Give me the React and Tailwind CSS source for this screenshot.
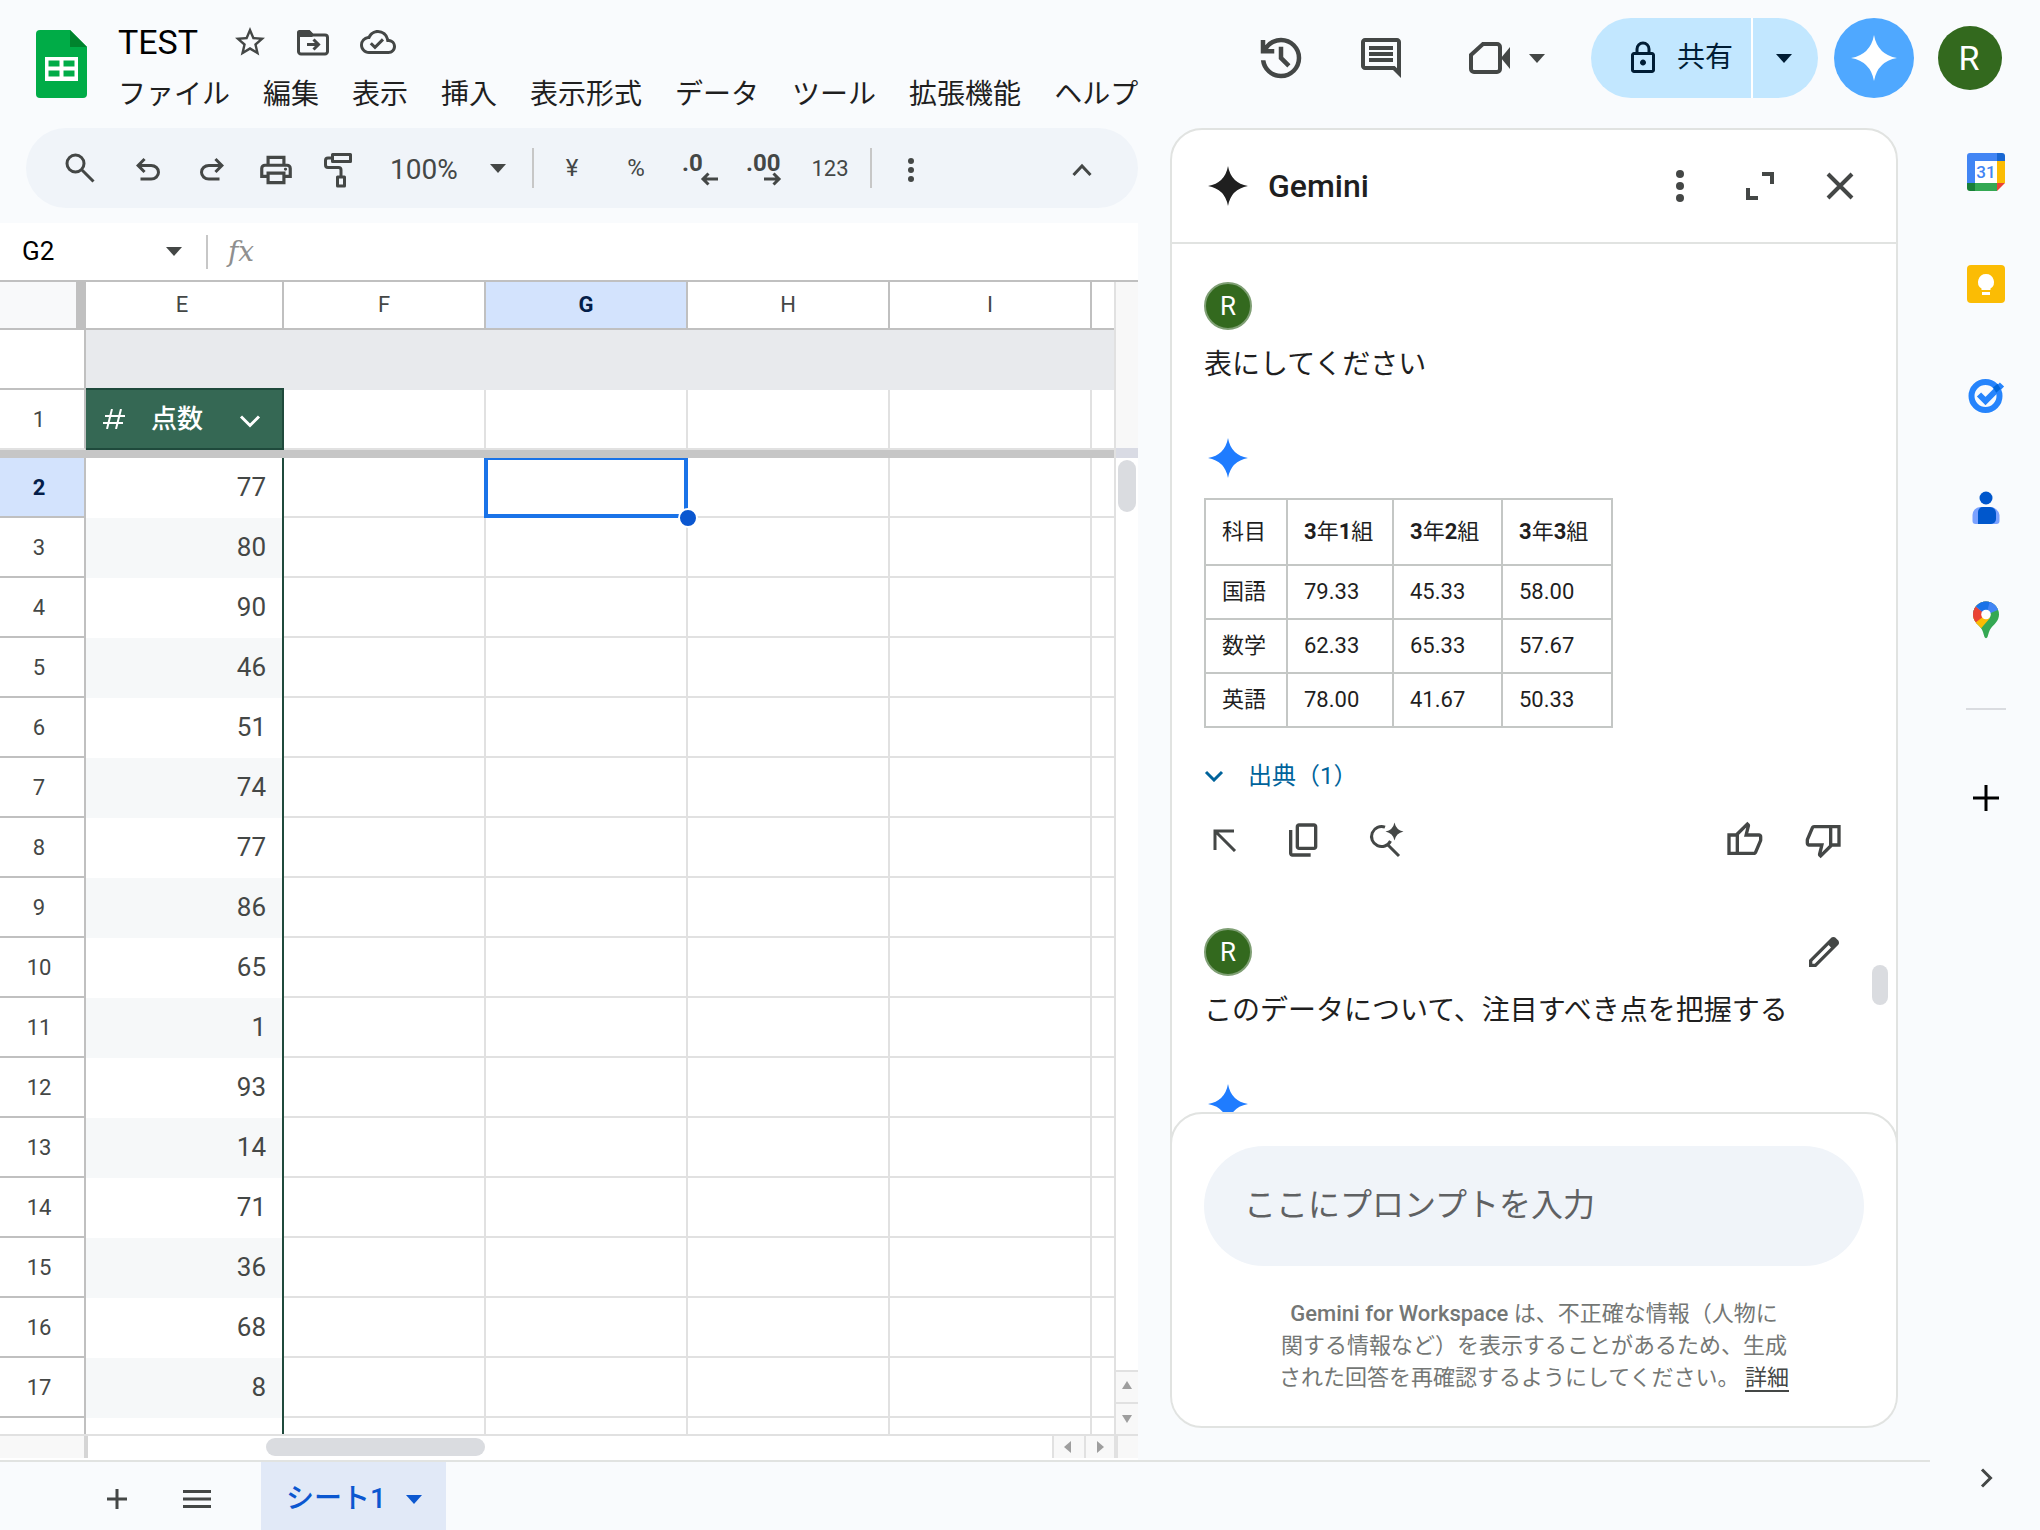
import React from "react";
import { MdStarBorder, MdOutlineCloudDone } from "react-icons/md";

const SYMBOLS = {
  undo: "M280-200v-80h284q63 0 109.5-40T720-420q0-60-46.5-100T564-560H312l104 104-56 56-200-200 200-200 56 56-104 104h252q97 0 166.5 63T800-420q0 94-69.5 157T564-200H280Z",
  redo: "M396-200q-97 0-166.5-63T160-420q0-94 69.5-157T396-640h252L544-744l56-56 200 200-200 200-56-56 104-104H396q-63 0-109.5 40T240-420q0 60 46.5 100T396-280h284v80H396Z",
  print:
    "M640-640v-120H320v120h-80v-200h480v200h-80Zm-480 80h640-640Zm560 100q17 0 28.5-11.5T760-500q0-17-11.5-28.5T720-540q-17 0-28.5 11.5T680-500q0 17 11.5 28.5T720-460Zm-80 260v-160H320v160h320Zm80 80H240v-160H80v-240q0-51 35-85.5t85-34.5h560q51 0 85.5 34.5T880-520v240H720v160Zm80-240v-160q0-17-11.5-28.5T760-560H200q-17 0-28.5 11.5T160-520v160h80v-80h480v80h80Z",
  history:
    "M480-120q-138 0-240.5-91.5T122-440h82q14 104 92.5 172T480-200q117 0 198.5-81.5T760-480q0-117-81.5-198.5T480-760q-69 0-129 32t-101 88h110v80H120v-240h80v94q51-64 124.5-99T480-840q75 0 140.5 28.5t114 77q48.5 48.5 77 114T840-480q0 75-28.5 140.5t-77 114q-48.5 48.5-114 77T480-120Zm112-192L440-464v-216h80v184l128 128-56 56Z",
  comment:
    "M880-80 720-240H160q-33 0-56.5-23.5T80-320v-480q0-33 23.5-56.5T160-880h640q33 0 56.5 23.5T880-800v720ZM160-320h594l46 45v-525H160v480Zm80-80h480v-80H240v80Zm0-120h480v-80H240v80Zm0-120h480v-80H240v80Z",
  lock: "M240-80q-33 0-56.5-23.5T160-160v-400q0-33 23.5-56.5T240-640h40v-80q0-83 58.5-141.5T480-920q83 0 141.5 58.5T680-720v80h40q33 0 56.5 23.5T800-560v400q0 33-23.5 56.5T720-80H240Zm0-80h480v-400H240v400Zm240-120q33 0 56.5-23.5T560-360q0-33-23.5-56.5T480-440q-33 0-56.5 23.5T400-360q0 33 23.5 56.5T480-280ZM360-640h240v-80q0-50-35-85t-85-35q-50 0-85 35t-35 85v80Z",
  copy: "M360-240q-33 0-56.5-23.5T280-320v-480q0-33 23.5-56.5T360-880h360q33 0 56.5 23.5T800-800v480q0 33-23.5 56.5T720-240H360Zm0-80h360v-480H360v480ZM200-80q-33 0-56.5-23.5T120-160v-560h80v560h440v80H200Z",
  thumbUp:
    "M720-120H280v-520l280-280 50 50q7 7 11.5 19t4.5 23v14l-44 174h258q32 0 56 24t24 56v80q0 7-2 15t-4 15L794-168q-9 20-30 34t-44 14Zm-360-80h360l120-280v-80H480l54-220-174 174v406Zm-80-440v80H160v360h120v80H80v-520h200Z",
  thumbDown:
    "M240-840h440v520L400-40l-50-50q-7-7-11.5-19t-4.5-23v-14l44-174H120q-32 0-56-24t-24-56v-80q0-7 2-15t4-15l120-282q9-20 30-34t44-14Zm360 80H240L120-480v80h360l-54 220 174-174v-406Zm80 440v-80h120v-360H680v-80h200v520H680Z",
  edit: "M200-200h57l391-391-57-57-391 391v57Zm-80 80v-170l528-527q12-11 26.5-17t30.5-6q16 0 31 6t26 18l55 56q12 11 17.5 26t5.5 30q0 16-5.5 30.5T817-647L290-120H120Z",
};

function Symbol({ name, size }) {
  return (
    <svg width={size} height={size} viewBox="0 -960 960 960" fill="currentColor" aria-hidden="true">
      <path d={SYMBOLS[name]} />
    </svg>
  );
}

function Line({ w, h, d, sw = 4, cap = "butt", join = "miter" }) {
  return (
    <svg width={w} height={h} viewBox={`0 0 ${w} ${h}`} fill="none" stroke="currentColor" strokeWidth={sw} strokeLinecap={cap} strokeLinejoin={join} aria-hidden="true">
      <path d={d} />
    </svg>
  );
}

function Caret({ w = 16, h = 9 }) {
  return (
    <svg width={w} height={h} viewBox="0 0 16 9" fill="currentColor" aria-hidden="true">
      <path d="M0 0h16l-8 9z" />
    </svg>
  );
}

function Spark({ size = 40 }) {
  return (
    <svg width={size} height={size} viewBox="0 0 40 40" fill="currentColor" aria-hidden="true">
      <path d="M20 0Q23 17 40 20Q23 23 20 40Q17 23 0 20Q17 17 20 0Z" />
    </svg>
  );
}

function Dots({ h = 32, r = 4 }) {
  return (
    <svg width="10" height={h} viewBox={`0 0 10 ${h}`} fill="currentColor" aria-hidden="true">
      <circle cx="5" cy={r} r={r} />
      <circle cx="5" cy={h / 2} r={r} />
      <circle cx="5" cy={h - r} r={r} />
    </svg>
  );
}

function Tool({ label, className = "w-16", children }) {
  return (
    <button type="button" aria-label={label} className={`flex h-full shrink-0 items-center justify-center ${className}`}>
      {children}
    </button>
  );
}

const MENUS = ["ファイル", "編集", "表示", "挿入", "表示形式", "データ", "ツール", "拡張機能", "ヘルプ"];

function Header() {
  return (
    <header className="flex h-32 shrink-0 items-start justify-between pr-[38px] pl-9 text-[#444746]">
      <div className="flex">
        <svg className="mt-[30px]" width="52" height="68" viewBox="0 0 52 68" aria-hidden="true">
          <path d="M4 0h30l17 17v47a4 4 0 0 1-4 4H4a4 4 0 0 1-4-4V4a4 4 0 0 1 4-4z" fill="#00ac47" />
          <path d="M34 0l17 17H34z" fill="#00832d" />
          <path d="M9 27h33v24H9zM12.500 30.500v6h11v-6zM27.500 30.500v6h11v-6zM12.500 40.500v6h11v-6zM27.500 40.500v6h11v-6z" fill="#fff" fillRule="evenodd" />
        </svg>
        <div className="flex flex-col pt-3.5 pl-[30px]">
          <div className="flex h-14 items-center">
            <h1 className="text-[34px] leading-none text-black">TEST</h1>
            <button type="button" aria-label="スターを付ける" className="ml-[34px]">
              <MdStarBorder size={36} />
            </button>
            <button type="button" aria-label="移動" className="ml-7">
              <svg width="34" height="28" viewBox="0 0 34 28" fill="none" stroke="currentColor" strokeWidth="3" aria-hidden="true">
                <path d="M3 3.500h10l3.500 3.500H29a2.500 2.500 0 0 1 2.500 2.500v14A2.500 2.500 0 0 1 29 26H5a2.500 2.500 0 0 1-2.500-2.500V5" />
                <path d="M1 9V4.500A2.500 2.500 0 0 1 3.500 2H13l5 5-2 2z" fill="currentColor" stroke="none" />
                <path d="M11 16.500h11M17.500 11.500l5 5-5 5" />
              </svg>
            </button>
            <button type="button" aria-label="保存済み" className="ml-[30px]">
              <MdOutlineCloudDone size={36} />
            </button>
          </div>
          <nav className="flex h-[50px] items-center gap-[33px] text-[28px] leading-none whitespace-nowrap text-[#1f1f1f]">
            {MENUS.map((m) => (
              <button key={m} type="button">{m}</button>
            ))}
          </nav>
        </div>
      </div>

      <div className="mt-[18px] flex h-20 shrink-0 items-center">
        <button type="button" aria-label="変更履歴" className="flex w-14 justify-center"><Symbol name="history" size={54} /></button>
        <button type="button" aria-label="コメント" className="ml-11 flex w-14 justify-center"><Symbol name="comment" size={48} /></button>
        <button type="button" aria-label="会議に参加" className="ml-[60px] flex items-center gap-[18px]">
          <svg width="42" height="34" viewBox="0 0 42 34" aria-hidden="true">
            <path d="M14 3h14a3 3 0 0 1 3 3v22a3 3 0 0 1-3 3H5a3 3 0 0 1-3-3V14z" fill="none" stroke="currentColor" strokeWidth="4" />
            <path d="M32 17l9-11v22z" fill="currentColor" />
          </svg>
          <Caret />
        </button>
        <div className="ml-[46px] flex h-20 overflow-hidden rounded-full bg-[#c2e7ff] text-[#001d35]">
          <button type="button" className="flex w-40 items-center gap-4 pl-[34px] text-[28px] leading-none">
            <Symbol name="lock" size={36} />
            共有
          </button>
          <button type="button" aria-label="共有オプション" className="flex w-[67px] items-center justify-center border-l-2 border-white pr-1">
            <Caret />
          </button>
        </div>
        <button type="button" aria-label="Gemini に相談" className="ml-4 flex size-20 items-center justify-center rounded-full bg-[#4fa8ff] text-white">
          <Spark size={46} />
        </button>
        <button type="button" aria-label="アカウント" className="ml-6 flex size-16 items-center justify-center rounded-full bg-[#33691e] pr-0.5 text-[34px] leading-none text-white">R</button>
      </div>
    </header>
  );
}

function Toolbar() {
  return (
    <div role="toolbar" aria-label="ツールバー" className="ml-[26px] flex h-20 shrink-0 items-center rounded-full bg-[#f0f4f9] pr-6 pl-[18px] text-[#444746]">
      <Tool label="検索" className="w-[72px]">
        <Line w={30} h={30} sw={3} d="M10.500 2a8.500 8.500 0 1 0 0 17a8.500 8.500 0 1 0 0-17zM16.500 16.500l12 12" />
      </Tool>
      <div className="flex h-full items-center pt-1">
        <Tool label="元に戻す"><Symbol name="undo" size={36} /></Tool>
        <Tool label="やり直し"><Symbol name="redo" size={36} /></Tool>
        <Tool label="印刷"><Symbol name="print" size={38} /></Tool>
        <Tool label="書式を貼り付け" className="w-16 pr-1">
          <Line w={32} h={38} sw={3} join="round" d="M10.500 3.500h18v7h-18zM10.500 7H6q-2.500 0-2.500 2.500V14q0 2.500 2.500 2.500h10.500q2.500 0 2.500 2.500v7M15.500 26h7v9h-7z" />
        </Tool>
      </div>
      <button type="button" aria-label="ズーム" className="flex h-full w-40 items-center justify-between pr-[26px] pl-[18px] text-[28px]">
        <span className="pt-1">100%</span>
        <Caret />
      </button>
      <div className="h-10 w-0.5 bg-[#c7c7c7]" />
      <Tool label="通貨の表示形式" className="ml-1.5 w-16 text-2xl">¥</Tool>
      <Tool label="パーセントの表示形式" className="w-16 text-2xl">%</Tool>
      <Tool label="小数点以下の桁数を減らす">
        <span className="flex w-9 flex-col pt-1 text-2xl leading-[18px] font-bold">
          <span className="self-start">.0</span>
          <span className="self-end"><Line w={18} h={14} sw={3} d="M18 7H3M8.500 1.500L3 7l5.500 5.500" /></span>
        </span>
      </Tool>
      <Tool label="小数点以下の桁数を増やす">
        <span className="flex w-9 flex-col pt-1 text-2xl leading-[18px] font-bold">
          <span className="self-start">.00</span>
          <span className="self-end"><Line w={18} h={14} sw={3} d="M0 7h15M9.500 1.500L15 7l-5.500 5.500" /></span>
        </span>
      </Tool>
      <Tool label="表示形式の詳細設定" className="w-[68px] text-[22px]">123</Tool>
      <div className="ml-1.5 h-10 w-0.5 bg-[#c7c7c7]" />
      <Tool label="その他" className="ml-[7px] w-16 pt-1"><Dots h={24} r={3} /></Tool>
      <Tool label="メニューを非表示" className="ml-auto w-16 pt-1"><Line w={20} h={14} sw={3} d="M1.500 12L10 3l8.500 9" /></Tool>
    </div>
  );
}

function FormulaBar() {
  return (
    <div className="mt-[15px] flex h-[59px] shrink-0 items-center border-b-2 border-[#c0c0c0] bg-white">
      <input aria-label="名前ボックス" defaultValue="G2" className="w-[166px] bg-transparent pl-[22px] text-[26px] text-black outline-none" />
      <button type="button" aria-label="名前付き範囲" className="text-[#444746]"><Caret /></button>
      <div className="ml-6 h-[34px] w-0.5 bg-[#c7c7c7]" />
      <label htmlFor="formula" className="ml-5 font-['DejaVu_Serif',serif] text-[28px] leading-none text-[#8f8f8f] italic">fx</label>
      <input id="formula" className="ml-4 min-w-0 flex-1 bg-transparent outline-none" />
    </div>
  );
}

const COLUMNS = ["F", "G", "H", "I"];
const SCORES = [77, 80, 90, 46, 51, 74, 77, 86, 65, 1, 93, 14, 71, 36, 68, 8, null];

function Sheet() {
  const head = "border-r-2 border-b-2 border-[#c0c0c0] p-0";
  const rowHead = "border-r-2 border-b-2 border-[#c0c0c0] p-0 pr-1.5 text-center text-[22px]";
  const cell = "relative border-r-2 border-b-2 border-[#e1e1e1] bg-white p-0";
  return (
    <div className="min-h-0 min-w-0 flex-1 overflow-hidden border-r-2 border-[#e1e1e1] bg-white">
      <table className="w-full table-fixed border-separate border-spacing-0 text-[#444746]">
        <colgroup>
          <col className="w-[86px]" />
          <col className="w-[198px]" />
          {COLUMNS.map((c) => <col key={c} className="w-[202px]" />)}
          <col />
        </colgroup>
        <thead>
          <tr className="h-12 text-[22px] leading-none">
            <td className="border-r-[10px] border-b-2 border-[#c0c0c0] bg-[#f8f9fa] p-0" />
            <th className="border-r-2 border-b-2 border-[#c0c0c0] p-0 pr-1 font-normal">E</th>
            {COLUMNS.map((c) =>
              c === "G" ? (
                <th key={c} className={`${head} bg-[#d3e3fd] font-bold text-[#041e49]`}>{c}</th>
              ) : (
                <th key={c} className={`${head} font-normal`}>{c}</th>
              )
            )}
            <th className="border-b-2 border-[#c0c0c0] p-0" />
          </tr>
        </thead>
        <tbody>
          <tr className="h-[60px]">
            <td className={rowHead} />
            <td className="border-b-2 border-[#1f4a3c] bg-[#e8eaed] p-0" />
            <td colSpan={5} className="bg-[#e8eaed] p-0" />
          </tr>
          <tr className="h-[60px]">
            <th className={`${rowHead} border-b-[#e1e1e1] font-normal`}>1</th>
            <td className="border-r-2 border-b-2 border-[#1f4a3c] bg-[#356854] p-0 text-white">
              <div className="flex items-center pl-[17px] text-[26px] leading-none">
                <Line w={22} h={20} sw={2} d="M2 7h20M0 14h20M9 0L4 20M18 0l-5 20" />
                <span className="ml-[26px] font-medium">点数</span>
                <button type="button" aria-label="列のメニュー" className="ml-9 pt-1">
                  <Line w={22} h={14} sw={3} d="M2 2.500l9 9 9-9" />
                </button>
              </div>
            </td>
            {COLUMNS.map((c) => <td key={c} className={cell} />)}
            <td className="border-b-2 border-[#e1e1e1] p-0" />
          </tr>
          <tr className="h-2">
            <td colSpan={7} className="bg-[#c6c6c6] p-0" />
          </tr>
          {SCORES.map((score, i) => (
            <tr key={i} className="h-[60px]">
              {i === 0 ? (
                <th className={`${rowHead} bg-[#d3e3fd] font-bold text-[#041e49]`}>{i + 2}</th>
              ) : (
                <th className={`${rowHead} font-normal`}>{score === null ? "" : i + 2}</th>
              )}
              <td className={`border-r-2 border-[#1f4a3c] p-0 pr-4 pb-0.5 text-right text-[26px] ${i % 2 ? "bg-[#f6f8f9]" : "bg-white"}`}>{score}</td>
              {COLUMNS.map((c) => (
                <td key={c} className={cell}>
                  {i === 0 && c === "G" && (
                    <>
                      <div className="absolute top-0 -right-0.5 -bottom-0.5 -left-0.5 z-10 border-4 border-t-2 border-[#1a73e8]" />
                      <div className="absolute -right-3 -bottom-3 z-20 size-5 rounded-full border-2 border-white bg-[#0b57d0]" />
                    </>
                  )}
                </td>
              ))}
              <td className="border-b-2 border-[#e1e1e1] p-0" />
            </tr>
          ))}
        </tbody>
      </table>
    </div>
  );
}

function VerticalScrollbar() {
  return (
    <div className="flex w-[22px] shrink-0 flex-col bg-white text-[#9e9e9e]">
      <div className="h-[166px] bg-[#f8f8f8]" />
      <div className="h-2.5 bg-[#d9dbe4]" />
      <div className="flex-1 px-0.5 pt-0.5">
        <div className="h-[52px] rounded-full bg-[#dadce0]" />
      </div>
      <button type="button" aria-label="上にスクロール" className="flex h-8 items-center justify-center border-t-2 border-[#e1e1e1] bg-[#f8f8f8] pb-1">
        <svg width="10" height="8" viewBox="0 0 10 8" fill="currentColor" aria-hidden="true"><path d="M5 0l5 8H0z" /></svg>
      </button>
      <button type="button" aria-label="下にスクロール" className="flex h-8 items-center justify-center border-t-2 border-[#e1e1e1] bg-[#f8f8f8]">
        <svg width="10" height="8" viewBox="0 0 10 8" fill="currentColor" aria-hidden="true"><path d="M0 0h10L5 8z" /></svg>
      </button>
    </div>
  );
}

function HorizontalScrollbar() {
  return (
    <div className="flex h-[26px] shrink-0 border-t-2 border-[#e1e1e1] bg-white pb-0.5 text-[#9e9e9e]">
      <div className="w-[88px] border-r-4 border-[#d5d5d5] bg-[#f8f8f8]" />
      <div className="flex-1 py-0.5">
        <div className="ml-[178px] h-[18px] w-[219px] rounded-full bg-[#dadce0]" />
      </div>
      <button type="button" aria-label="左にスクロール" className="flex w-8 items-center justify-center border-l-2 border-[#e1e1e1] bg-[#f8f8f8] pr-1">
        <svg width="7" height="12" viewBox="0 0 7 12" fill="currentColor" aria-hidden="true"><path d="M7 0v12L0 6z" /></svg>
      </button>
      <button type="button" aria-label="右にスクロール" className="flex w-[30px] items-center justify-center border-l-2 border-[#e1e1e1] bg-[#f8f8f8]">
        <svg width="7" height="12" viewBox="0 0 7 12" fill="currentColor" aria-hidden="true"><path d="M0 0v12l7-6z" /></svg>
      </button>
      <div className="w-6 border-l-4 border-[#e1e1e1] bg-[#f8f8f8]" />
    </div>
  );
}

function Avatar() {
  return (
    <div className="flex size-12 shrink-0 items-center justify-center rounded-full border-2 border-[#7f9f74] bg-[#33691e] text-[26px] leading-none text-white">R</div>
  );
}

const RESULT_ROWS = [
  ["国語", "79.33", "45.33", "58.00"],
  ["数学", "62.33", "65.33", "57.67"],
  ["英語", "78.00", "41.67", "50.33"],
];

function GeminiPanel() {
  const cell = "border-2 border-[#c4c7c5] p-0 pl-4";
  return (
    <aside aria-label="Gemini" className="mx-8 mb-8 flex w-[728px] shrink-0 flex-col overflow-hidden rounded-[32px] border-2 border-[#e1e3e1] bg-white text-[#1f1f1f]">
      <div className="flex h-[114px] shrink-0 items-center border-b-2 border-[#e1e3e1] pl-9">
        <Spark size={40} />
        <h2 className="ml-5 flex-1 text-[32px] leading-none font-medium">Gemini</h2>
        <div className="flex items-center text-[#444746]">
          <button type="button" aria-label="その他" className="flex w-20 justify-center"><Dots h={32} r={4} /></button>
          <button type="button" aria-label="展開" className="flex w-20 justify-center"><Line w={28} h={28} d="M16 2h10v10M2 16v10h10" /></button>
          <button type="button" aria-label="閉じる" className="mr-4 flex w-20 justify-center"><Line w={28} h={28} d="M2 2l24 24M26 2L2 26" /></button>
        </div>
      </div>

      <div className="relative min-h-0 flex-1 overflow-hidden px-8 pt-[38px]">
        <Avatar />
        <p className="mt-3.5 text-[28px] leading-[42px]">表にしてください</p>
        <div className="mt-[52px] ml-1 text-[#1f7cff]"><Spark size={40} /></div>
        <table className="mt-5 w-[408px] table-fixed border-collapse text-left text-[22px] leading-none">
          <colgroup>
            <col className="w-[82px]" />
            <col className="w-[106px]" />
            <col className="w-[109px]" />
            <col className="w-[110px]" />
          </colgroup>
          <thead>
            <tr className="h-[66px]">
              <th className={`${cell} font-normal`}>科目</th>
              {["1", "2", "3"].map((n) => (
                <th key={n} className={`${cell} font-normal`}>
                  <b>3</b>年<b>{n}</b>組
                </th>
              ))}
            </tr>
          </thead>
          <tbody>
            {RESULT_ROWS.map((row) => (
              <tr key={row[0]} className="h-[54px]">
                {row.map((v) => <td key={v} className={cell}>{v}</td>)}
              </tr>
            ))}
          </tbody>
        </table>
        <button type="button" className="mt-7 flex h-10 items-center gap-6 text-2xl leading-none text-[#00639b]">
          <Line w={20} h={12} sw={3} d="M2 2l8 8 8-8" />
          出典（1）
        </button>
        <div className="mt-6 flex h-10 items-center text-[#444746]">
          <button type="button" aria-label="挿入" className="ml-2 w-6"><Line w={26} h={24} sw={3} d="M3 22V3h19M3 3l20 20" /></button>
          <button type="button" aria-label="コピー" className="ml-12"><Symbol name="copy" size={40} /></button>
          <button type="button" aria-label="検索で確認" className="ml-11">
            <svg width="36" height="38" viewBox="0 0 36 38" fill="none" stroke="currentColor" strokeWidth="3" aria-hidden="true">
              <path d="M17 6.200A10 10 0 1 0 22.500 20M19.500 23.500L31 35" />
              <path d="M26.500 1.500Q28 9 35.500 10.500Q28 12 26.500 19.500Q25 12 17.500 10.500Q25 9 26.500 1.500Z" fill="currentColor" stroke="none" />
            </svg>
          </button>
          <button type="button" aria-label="良い回答" className="ml-auto"><Symbol name="thumbUp" size={40} /></button>
          <button type="button" aria-label="悪い回答" className="mr-5 ml-10"><Symbol name="thumbDown" size={40} /></button>
        </div>
        <div className="mt-[68px] flex items-center justify-between">
          <Avatar />
          <button type="button" aria-label="プロンプトを編集" className="mr-5 text-[#444746]"><Symbol name="edit" size={40} /></button>
        </div>
        <p className="mt-3.5 text-[28px] leading-[42px] whitespace-nowrap">このデータについて、注目すべき点を把握する</p>
        <div className="mt-[52px] ml-1 text-[#1f7cff]"><Spark size={40} /></div>
        <div className="absolute right-2 bottom-[107px] h-10 w-4 rounded-full bg-[#dadce0]" />
      </div>

      <div className="-mx-0.5 -mb-0.5 shrink-0 rounded-[32px] border-2 border-[#e1e3e1] bg-white px-8 pt-8 pb-8">
        <input
          aria-label="プロンプト"
          placeholder="ここにプロンプトを入力"
          className="h-[120px] w-full rounded-full bg-[#f0f4f9] pb-0.5 pl-10 text-[32px] outline-none placeholder:text-[#5f6163]"
        />
        <p className="mt-8 text-center text-[22px] leading-8 whitespace-nowrap text-[#747775]">
          <span className="font-medium">Gemini for Workspace</span> は、不正確な情報（人物に
          <br />
          関する情報など）を表示することがあるため、生成
          <br />
          された回答を再確認するようにしてください。{" "}
          <a href="#details" className="border-b-2 border-[#444746] text-[#444746]">詳細</a>
        </p>
      </div>
    </aside>
  );
}

function SheetTabs() {
  return (
    <footer className="flex h-[70px] shrink-0 border-t-2 border-[#e1e3e1] pl-[77px] text-[#444746]">
      <button type="button" aria-label="シートを追加" className="flex w-20 items-center justify-center pt-1.5"><Line w={20} h={20} sw={3} d="M10 0v20M0 10h20" /></button>
      <button type="button" aria-label="すべてのシート" className="flex w-20 items-center justify-center pt-1.5"><Line w={28} h={20} sw={3} d="M0 2.500h28M0 10h28M0 17.500h28" /></button>
      <button type="button" className="ml-6 flex w-[185px] items-center justify-between bg-[#e1e9f7] pt-1.5 pr-6 pl-[25px] text-[28px] leading-none font-medium text-[#0b57d0]">
        シート1
        <Caret />
      </button>
    </footer>
  );
}

function AddOns() {
  return (
    <aside aria-label="サイドパネル" className="flex w-[110px] shrink-0 flex-col items-center pt-6 pl-0.5">
      <div className="flex flex-col gap-[72px]">
        <button type="button" aria-label="カレンダー" className="flex size-10 items-center justify-center">
          <svg width="38" height="38" viewBox="0 0 38 38" aria-hidden="true">
            <path d="M3 0h27v8H8v22H0V3a3 3 0 0 1 3-3z" fill="#4285f4" />
            <path d="M30 0h5a3 3 0 0 1 3 3v5h-8z" fill="#1967d2" />
            <path d="M30 8h8v22h-8z" fill="#fbbc04" />
            <path d="M8 30h22v8H8z" fill="#34a853" />
            <path d="M0 30h8v8H3a3 3 0 0 1-3-3z" fill="#188038" />
            <path d="M30 30h8l-8 8z" fill="#ea4335" />
            <path d="M8 8h22v22H8z" fill="#fff" />
            <text x="19" y="25" textAnchor="middle" fontFamily="Roboto, sans-serif" fontSize="17" fontWeight="500" fill="#4285f4">31</text>
          </svg>
        </button>
        <button type="button" aria-label="Keep" className="flex size-10 items-center justify-center">
          <svg width="38" height="38" viewBox="0 0 38 38" aria-hidden="true">
            <rect width="38" height="38" rx="4" fill="#fbbc04" />
            <path d="M19 9a8 8 0 0 1 4.500 14.600V25h-9v-1.400A8 8 0 0 1 19 9zM15 27h8v3h-8z" fill="#fff" />
          </svg>
        </button>
        <button type="button" aria-label="ToDo リスト" className="flex size-10 items-center justify-center">
          <svg width="38" height="38" viewBox="0 0 38 38" fill="none" aria-hidden="true">
            <circle cx="18.500" cy="19" r="14" stroke="#2684fc" strokeWidth="6" />
            <path d="M12 17.500l6.500 6.500L35 7.500" stroke="#2684fc" strokeWidth="6" />
            <path d="M26 10.500l4.500-3.700 3.200 5-4.500 4z" fill="#0066da" />
          </svg>
        </button>
        <button type="button" aria-label="連絡先" className="flex size-10 items-center justify-center">
          <svg width="38" height="38" viewBox="0 0 38 38" aria-hidden="true">
            <path d="M13 18h10a9.500 9.500 0 0 1 9.500 8v6a3 3 0 0 1-3 3h-21a3 3 0 0 1-3-3v-6A8 8 0 0 1 13 18z" fill="#7ba2ff" />
            <path d="M16 18h7a6 6 0 0 1 6 6v6a5 5 0 0 1-5 5H11V23a5 5 0 0 1 5-5z" fill="#0057cc" />
            <circle cx="19" cy="9" r="6.500" fill="#0057cc" />
          </svg>
        </button>
        <button type="button" aria-label="マップ" className="flex size-10 items-center justify-center">
          <svg width="28" height="38" viewBox="0 0 28 38" aria-hidden="true">
            <defs>
              <clipPath id="pin">
                <path d="M14 0.500a13 13 0 0 1 13 13c0 6-4 9-7.500 13C17 29.500 16.500 33 15.500 36c-.5 1.500-2.500 1.500-3 0-1-3-1.500-6.500-4-9.500C5 22.500 1 19.500 1 13.500a13 13 0 0 1 13-13z" />
              </clipPath>
            </defs>
            <g clipPath="url(#pin)">
              <path d="M0 0h28v38H0z" fill="#34a853" />
              <path d="M0 28L28-4H0z" fill="#fbbc04" />
              <path d="M-2 17L14 13.500 28 0H0z" fill="#4285f4" />
              <path d="M0 0L3.500 5.500 14 14 4 24H0z" fill="#ea4335" />
              <path d="M4 5L14 14 22 1 10-2z" fill="#1a73e8" />
              <path d="M18 0L14 14 28 8V0z" fill="#4285f4" />
              <path d="M3 22L14 13.500 18 17 8.500 28z" fill="#fbbc04" />
            </g>
            <circle cx="14" cy="13.500" r="4.800" fill="#fff" />
          </svg>
        </button>
      </div>
      <div className="mt-[68px] h-0.5 w-10 bg-[#dadce0]" />
      <button type="button" aria-label="アドオンを取得" className="mt-[74px] text-black"><Line w={28} h={28} sw={3} d="M14 1v26M1 14h26" /></button>
      <button type="button" aria-label="サイドパネルを非表示" className="mt-auto mb-[42px] text-[#444746]"><Line w={14} h={20} sw={3} d="M3 1.500l8.500 8.500L3 18.500" /></button>
    </aside>
  );
}

export default function App() {
  return (
    <div className="flex h-screen flex-col overflow-hidden bg-[#f9fbfd] font-[Roboto,'Noto_Sans_CJK_JP',sans-serif]" lang="ja">
      <Header />
      <div className="flex min-h-0 flex-1">
        <div className="flex min-w-0 flex-1 flex-col">
          <div className="flex min-h-0 flex-1">
            <main className="flex min-w-0 flex-1 flex-col">
              <Toolbar />
              <FormulaBar />
              <div className="flex min-h-0 flex-1">
                <Sheet />
                <VerticalScrollbar />
              </div>
              <HorizontalScrollbar />
            </main>
            <GeminiPanel />
          </div>
          <SheetTabs />
        </div>
        <AddOns />
      </div>
    </div>
  );
}
